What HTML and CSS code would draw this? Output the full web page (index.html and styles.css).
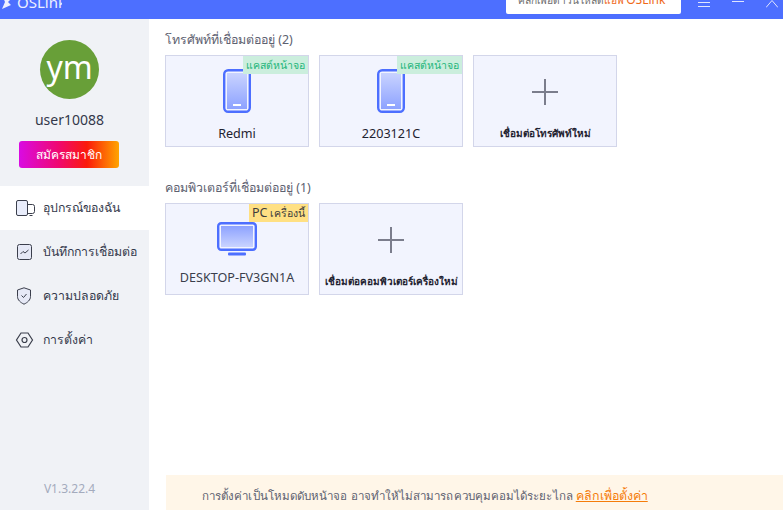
FILE: index.html
```html
<!DOCTYPE html>
<html lang="th">
<head>
<meta charset="utf-8">
<title>OSLink</title>
<link rel="stylesheet" href="styles.css">
</head>
<body>
<div class="app">
  <header class="topbar">
    <div class="brand">
      <svg class="brand-icon" width="16" height="16" viewBox="0 0 16 16"><path d="M3 1l9 4-3 3 3 3-9 4 3-7z" fill="#fff"/></svg>
      <span>OSLink</span>
    </div>
    <div class="top-right">
      <a class="promo">คลิกเพื่อดาวน์โหลด<span class="promo-em">แอพ <span class="promo-name">OSLink</span></span></a>
      <div class="winctl">
        <svg width="12" height="10" viewBox="0 0 12 10"><path d="M0 2.500h12M0 6.500h12" stroke="#dfe5ff" fill="none"/></svg>
        <svg width="12" height="10" viewBox="0 0 12 10"><path d="M0 1.500h12" stroke="#dfe5ff" fill="none"/></svg>
        <svg width="12" height="10" viewBox="0 0 12 10"><path d="M0 7.500L6 .5l6 7" stroke="#dfe5ff" fill="none"/></svg>
      </div>
    </div>
  </header>
  <div class="body">
    <aside class="sidebar">
      <div class="profile">
        <div class="avatar">ym</div>
        <div class="username">user10088</div>
        <button class="join">สมัครสมาชิก</button>
      </div>
      <nav class="menu">
        <a class="menu-item active">
          <svg class="menu-icon" width="22" height="18" viewBox="0 0 22 18"><rect x="1.500" y="1.500" width="11" height="15" rx="1.500" fill="#e9edfb" stroke="#3b3f4c"/><path d="M12.500 5.500h5a2 2 0 0 1 2 2v5a2 2 0 0 1-2 2h-5" fill="none" stroke="#3b3f4c"/><path d="M14.500 16.500h3" stroke="#3b3f4c"/></svg>
          <span>อุปกรณ์ของฉัน</span>
        </a>
        <a class="menu-item">
          <svg class="menu-icon" width="22" height="18" viewBox="0 0 22 18"><rect x="2.500" y="1.500" width="14" height="15" rx="2" fill="#e6e9f6" stroke="#3b3f4c"/><path d="M5.500 11l2.500-2.500 2 1.500 3.500-3" fill="none" stroke="#3b3f4c"/></svg>
          <span>บันทึกการเชื่อมต่อ</span>
        </a>
        <a class="menu-item">
          <svg class="menu-icon" width="22" height="18" viewBox="0 0 22 18"><path d="M9 .8l6.500 2.200v6.500c0 3.500-3 6-6.500 7.700-3.500-1.700-6.500-4.200-6.500-7.700V3z" fill="#e6e9f6" stroke="#3b3f4c"/><path d="M6.500 8.500l2 2 3-3.500" fill="none" stroke="#3b3f4c"/></svg>
          <span>ความปลอดภัย</span>
        </a>
        <a class="menu-item">
          <svg class="menu-icon" width="22" height="18" viewBox="0 0 22 18"><path d="M6 2h7l4.500 7-4.500 7H6L1.500 9z" fill="none" stroke="#3b3f4c" stroke-width="1.200"/><circle cx="9.500" cy="9" r="2.500" fill="none" stroke="#3b3f4c" stroke-width="1.200"/></svg>
          <span>การตั้งค่า</span>
        </a>
      </nav>
      <div class="version">V1.3.22.4</div>
    </aside>
    <main class="content">
      <section class="phones">
        <h2 class="section-title">โทรศัพท์ที่เชื่อมต่ออยู่ (2)</h2>
        <div class="cards">
          <div class="card">
            <span class="tag tag-green">แคสต์หน้าจอ</span>
            <svg class="phone-icon" width="28" height="44" viewBox="0 0 28 44"><defs><linearGradient id="pg1" x1="0" y1="0" x2="0" y2="1"><stop offset="0" stop-color="#c9d3ff"/><stop offset="1" stop-color="#8da2ff"/></linearGradient></defs><rect x="1.200" y="1.200" width="25.600" height="41.600" rx="4" fill="#f2f4fe" stroke="#4d6fff" stroke-width="2.400"/><rect x="4" y="4" width="20" height="36" fill="url(#pg1)"/><rect x="10" y="35" width="8" height="2" fill="#fff"/></svg>
            <div class="card-name">Redmi</div>
          </div>
          <div class="card">
            <span class="tag tag-green">แคสต์หน้าจอ</span>
            <svg class="phone-icon" width="28" height="44" viewBox="0 0 28 44"><rect x="1.200" y="1.200" width="25.600" height="41.600" rx="4" fill="#f2f4fe" stroke="#4d6fff" stroke-width="2.400"/><rect x="4" y="4" width="20" height="36" fill="url(#pg1)"/><rect x="10" y="35" width="8" height="2" fill="#fff"/></svg>
            <div class="card-name">2203121C</div>
          </div>
          <div class="card card-add">
            <svg class="plus-icon" width="26" height="26" viewBox="0 0 26 26"><path d="M13 0v26M0 13h26" stroke="#7b7d8c" stroke-width="2" fill="none"/></svg>
            <div class="add-label">เชื่อมต่อโทรศัพท์ใหม่</div>
          </div>
        </div>
      </section>
      <section class="computers">
        <h2 class="section-title">คอมพิวเตอร์ที่เชื่อมต่ออยู่ (1)</h2>
        <div class="cards">
          <div class="card">
            <span class="tag tag-yellow"><span class="pc">PC</span> เครื่องนี้</span>
            <svg class="pc-icon" width="40" height="34" viewBox="0 0 40 34"><defs><linearGradient id="pg2" x1="0" y1="0" x2="0" y2="1"><stop offset="0" stop-color="#8da2ff"/><stop offset="1" stop-color="#c9d3ff"/></linearGradient></defs><rect x="1.200" y="1.200" width="37.600" height="26.600" rx="3" fill="#f2f4fe" stroke="#4d6fff" stroke-width="2.400"/><rect x="4" y="4" width="32" height="21" fill="url(#pg2)"/><rect x="11" y="30.500" width="18" height="3" rx="1" fill="#4d6fff"/></svg>
            <div class="card-name pc-name">DESKTOP-FV3GN1A</div>
          </div>
          <div class="card card-add">
            <svg class="plus-icon" width="26" height="26" viewBox="0 0 26 26"><path d="M13 0v26M0 13h26" stroke="#7b7d8c" stroke-width="2" fill="none"/></svg>
            <div class="add-label">เชื่อมต่อคอมพิวเตอร์เครื่องใหม่</div>
          </div>
        </div>
      </section>
      <div class="notice"><span class="notice-text">การตั้งค่าเป็นโหมดดับหน้าจอ อาจทำให้ไม่สามารถควบคุมคอมได้ระยะไกล</span> <a class="notice-link">คลิกเพื่อตั้งค่า</a></div>
    </main>
  </div>
</div>
</body>
</html>
```
FILE: styles.css
```css
* { box-sizing: border-box; }
html, body { margin: 0; padding: 0; height: 100%; }
body {
  font-family: "Noto Sans", "Open Sans", sans-serif;
  background: #fff;
  overflow: hidden;
}
.app { width: 783px; height: 510px; display: flex; flex-direction: column; overflow: hidden; }

.topbar {
  flex: 0 0 19px;
  height: 19px;
  background: #4d6fff;
  display: flex;
  justify-content: space-between;
  align-items: flex-end;
  overflow: hidden;
}
.brand {
  display: flex;
  align-items: center;
  gap: 2px;
  width: 62px;
  overflow: hidden;
  color: #fff;
  font-size: 15px;
  line-height: 20px;
  margin-bottom: 7px;
  opacity: .9;
}
.brand-icon { margin-left: -1px; flex: none; }
.top-right { display: flex; align-items: flex-end; }
.promo {
  display: block;
  width: 175px;
  height: 30px;
  margin-bottom: 5px;
  padding-right: 4px;
  background: #fff;
  border-radius: 2px;
  color: #6d6d6d;
  font-size: 10.200px;
  line-height: 32px;
  text-align: center;
  white-space: nowrap;
}
.promo-em { color: #ef6a1a; }
.promo-name { font-size: 12px; }
.winctl { display: flex; gap: 22px; width: 102px; padding: 0 0 9px 17px; align-items: flex-end; }

.body { flex: 1; display: flex; min-height: 0; }

.sidebar {
  flex: 0 0 149px;
  background: #f0f2f6;
  display: flex;
  flex-direction: column;
}
.profile {
  display: flex;
  flex-direction: column;
  align-items: center;
  padding: 21px 10px 0 0;
}
.avatar {
  width: 59px;
  height: 59px;
  border-radius: 50%;
  background: #689f38;
  color: #fff;
  font-size: 32px;
  line-height: 54px;
  text-align: center;
}
.username { margin-top: 9px; font-size: 14px; line-height: 24px; color: #33384a; }
.join {
  margin-top: 9px;
  margin-right: 1px;
  width: 100px;
  height: 27px;
  border: 0;
  border-radius: 3px;
  background: linear-gradient(90deg, #d90be3 0%, #f0086e 40%, #fb1a0a 68%, #ffa500 100%);
  color: #fff;
  font-family: inherit;
  font-size: 12px;
  padding: 0;
}
.menu { margin-top: 18px; display: flex; flex-direction: column; }
.menu-item {
  height: 44px;
  display: flex;
  align-items: center;
  padding-left: 15px;
  padding-bottom: 1px;
  gap: 6px;
  font-size: 12.300px;
  color: #33384a;
  white-space: nowrap;
}
.menu-item.active { background: #fff; }
.menu-icon { flex: none; }
.version {
  margin-top: auto;
  padding: 0 10px 12px 0;
  text-align: center;
  font-size: 12px;
  line-height: 18px;
  color: #a4abbd;
}

.content {
  flex: 1;
  min-width: 0;
  display: flex;
  flex-direction: column;
  padding: 11px 0 0 16px;
}
.section-title {
  margin: 0 0 6px;
  font-size: 12.400px;
  font-weight: 400;
  line-height: 19px;
  color: #5d6170;
}
.computers { margin-top: 31px; }
.cards { display: flex; gap: 10px; }
.card {
  position: relative;
  width: 144px;
  height: 92px;
  background: #f2f4fe;
  border: 1px solid #d3d6ea;
  display: flex;
  flex-direction: column;
  align-items: center;
}
.tag {
  position: absolute;
  top: 0;
  right: 0;
  height: 18px;
  font-size: 10.500px;
  line-height: 18px;
  white-space: nowrap;
  text-align: center;
}
.tag-green { background: #cbeedd; color: #1db57a; width: 65px; }
.tag-yellow { background: #ffe083; color: #3c3c3c; width: 59px; }
.pc { font-size: 12.500px; }
.phone-icon { margin-top: 13px; flex: none; }
.card-name {
  margin-top: 12px;
  font-size: 12.600px;
  line-height: 18px;
  color: #1f2230;
}
.pc-icon { margin-top: 18px; flex: none; }
.pc-name { margin-top: 13px; color: #3a3e4c; }
.plus-icon { margin-top: 23px; flex: none; }
.add-label {
  margin-top: 21px;
  font-size: 10px;
  font-weight: 700;
  line-height: 14px;
  color: #1f2230;
  white-space: nowrap;
}
.notice {
  margin-top: auto;
  margin-left: 1px;
  height: 35px;
  background: #fff6e8;
  padding-left: 36px;
  font-size: 11.550px;
  line-height: 42px;
  color: #5d6170;
  white-space: nowrap;
  overflow: hidden;
}
.notice-text { letter-spacing: .07px; }
.notice-link { color: #f57c0a; text-decoration: underline; font-size: 12.400px; }
```
